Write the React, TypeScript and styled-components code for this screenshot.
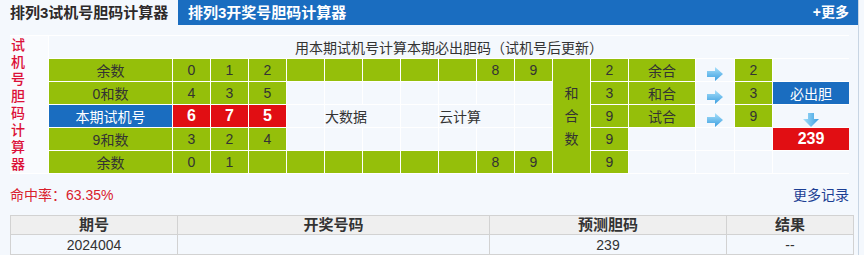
import React, { FC } from "react";
import styled, { createGlobalStyle } from "styled-components";

const PAGE_BG = "#f4f8fd";
const GREEN = "#95bf0a";
const BLUE = "#1a6dc0";
const RED = "#e10e13";

const GlobalStyle = createGlobalStyle`
  html, body {
    margin: 0;
    padding: 0;
    background: ${PAGE_BG};
    font-family: "Liberation Sans", "Noto Sans CJK SC", sans-serif;
    color: #333;
  }
`;

const Page = styled.div`
  width: 858px;
  min-height: 255px;
  border-right: 1px solid #c8d5e3;
`;

const TabBar = styled.div`
  display: flex;
  height: 25px;
  line-height: 25px;
  font-weight: bold;
  font-size: 15px;
`;

const ActiveTab = styled.div`
  width: 168px;
  padding-left: 10px;
  color: #2e2a2a;
  white-space: nowrap;
`;

const BlueBar = styled.div`
  flex: 1;
  display: flex;
  justify-content: space-between;
  padding: 0 9px 0 10px;
  background: ${BLUE};
  color: #fff;
`;

const MoreLink = styled.span`
  font-size: 14px;
`;

const Body = styled.div`
  padding: 10px 9px 0 10px;
`;

const Board = styled.div`
  display: grid;
  grid-template-columns: 38px 123px repeat(10, 37px) 37px 37px 66px 38px 37px 76px;
  grid-auto-rows: 22px;
  gap: 1px;
  padding: 1px 0;
  background: #fff;
`;

type Tone = "plain" | "green" | "blue" | "red";

const tones: Record<Tone, { bg: string; fg: string }> = {
  plain: { bg: PAGE_BG, fg: "#333" },
  green: { bg: GREEN, fg: "#333" },
  blue: { bg: BLUE, fg: "#fff" },
  red: { bg: RED, fg: "#fff" },
};

const Cell = styled.div<{
  $tone?: Tone;
  $span?: number;
  $rows?: number;
  $align?: "left" | "center";
  $valign?: "center" | "end";
}>`
  display: flex;
  align-items: ${(p) => (p.$valign === "end" ? "flex-end" : "center")};
  justify-content: ${(p) => (p.$align === "left" ? "flex-start" : "center")};
  grid-column: span ${(p) => p.$span ?? 1};
  grid-row: span ${(p) => p.$rows ?? 1};
  background: ${(p) => tones[p.$tone ?? "plain"].bg};
  color: ${(p) => tones[p.$tone ?? "plain"].fg};
  font-size: ${(p) => (p.$tone === "red" ? "16px" : "14px")};
  font-weight: ${(p) => (p.$tone === "red" ? "bold" : "normal")};
  white-space: nowrap;
`;

const SideLabel = styled.div`
  grid-row: span 6;
  display: flex;
  flex-direction: column;
  justify-content: center;
  align-items: flex-start;
  padding-left: 1px;
  background: #f9fbfe;
  color: #dc1038;
  font-size: 14px;
  font-weight: 500;
  line-height: 17px;
`;

const StackText = styled.div`
  display: flex;
  flex-direction: column;
  align-items: center;
  line-height: 23px;
`;

const StatsRow = styled.div`
  display: flex;
  justify-content: space-between;
  align-items: center;
  height: 20px;
  margin: 10px 0 11px;
  font-size: 14px;
`;

const HitRate = styled.span`
  color: #d9202c;
`;

const Records = styled.span`
  color: #1c3f94;
`;

const History = styled.table`
  width: 839px;
  border-collapse: collapse;
  table-layout: fixed;
  font-size: 14px;
`;

const Th = styled.th<{ $w: number }>`
  width: ${(p) => p.$w}px;
  height: 18px;
  padding: 0;
  line-height: 18px;
  border: 1px solid #d2d2d2;
  background: #efefef;
  font-size: 15px;
  font-weight: bold;
  color: #333;
`;

const Td = styled.td`
  height: 19px;
  padding: 0;
  border: 1px solid #d2d2d2;
  text-align: center;
  color: #333;
`;

const RightArrow: FC = () => (
  <svg width="16" height="14" viewBox="0 0 16 14">
    <defs>
      <linearGradient id="ra" x1="0" y1="0" x2="0" y2="1">
        <stop offset="0" stopColor="#a8e0fa" />
        <stop offset="1" stopColor="#3b9ee0" />
      </linearGradient>
    </defs>
    <path d="M0 4H8V0L16 7L8 14V10H0Z" fill="url(#ra)" />
  </svg>
);

const DownArrow: FC = () => (
  <svg width="16" height="14" viewBox="0 0 16 14">
    <defs>
      <linearGradient id="da" x1="0" y1="0" x2="1" y2="0">
        <stop offset="0" stopColor="#a8e0fa" />
        <stop offset="1" stopColor="#3b9ee0" />
      </linearGradient>
    </defs>
    <path d="M5 0H11V6H16L8 14L0 6H5Z" fill="url(#da)" />
  </svg>
);

type Slot = { text?: string; tone?: Tone; span?: number; align?: "left" | "center" };

const g = (text = ""): Slot => ({ text, tone: "green" });
const p = (text = "", span = 1, align: "left" | "center" = "center"): Slot => ({
  text,
  span,
  align,
});

// left half of each row: label + ten digit columns
const rows: Slot[][] = [
  [g("余数"), g("0"), g("1"), g("2"), g(), g(), g(), g(), g(), g("8"), g("9")],
  [g("0和数"), g("4"), g("3"), g("5"), p(), p(), p(), p(), p(), p(), p()],
  [
    { text: "本期试机号", tone: "blue" },
    { text: "6", tone: "red" },
    { text: "7", tone: "red" },
    { text: "5", tone: "red" },
    p(),
    p("大数据", 2, "left"),
    p(),
    p("云计算", 2, "left"),
    p(),
  ],
  [g("9和数"), g("3"), g("2"), g("4"), p(), p(), p(), p(), p(), p(), p()],
  [g("余数"), g("0"), g("1"), g(), g(), g(), g(), g(), g(), g("8"), g("9")],
];

const sums = [
  { val: "2", label: "余合", res: "2" },
  { val: "3", label: "和合", res: "3" },
  { val: "9", label: "试合", res: "9" },
  { val: "9" },
  { val: "9" },
];

const lastColumn = (i: number) => {
  if (i === 1) return <Cell $tone="blue">必出胆</Cell>;
  if (i === 2)
    return (
      <Cell $valign="end">
        <DownArrow />
      </Cell>
    );
  if (i === 3) return <Cell $tone="red">239</Cell>;
  return <Cell />;
};

const App: FC = () => {
  return (
    <Page>
      <GlobalStyle />
      <TabBar>
        <ActiveTab>排列3试机号胆码计算器</ActiveTab>
        <BlueBar>
          <span>排列3开奖号胆码计算器</span>
          <MoreLink>+更多</MoreLink>
        </BlueBar>
      </TabBar>
      <Body>
        <Board>
          <SideLabel>
            {"试机号胆码计算器".split("").map((c, i) => (
              <span key={i}>{c}</span>
            ))}
          </SideLabel>
          <Cell $span={17}>用本期试机号计算本期必出胆码（试机号后更新）</Cell>
          {rows.map((row, i) => (
            <React.Fragment key={i}>
              {row.map((s, j) => (
                <Cell key={j} $tone={s.tone} $span={s.span} $align={s.align}>
                  {s.text}
                </Cell>
              ))}
              {i === 0 && (
                <Cell $tone="green" $rows={5}>
                  <StackText>
                    <span>和</span>
                    <span>合</span>
                    <span>数</span>
                  </StackText>
                </Cell>
              )}
              <Cell $tone="green">{sums[i].val}</Cell>
              {sums[i].label ? (
                <>
                  <Cell $tone="green">{sums[i].label}</Cell>
                  <Cell $valign="end">
                    <RightArrow />
                  </Cell>
                  <Cell $tone="green">{sums[i].res}</Cell>
                </>
              ) : (
                <>
                  <Cell />
                  <Cell />
                  <Cell />
                </>
              )}
              {lastColumn(i)}
            </React.Fragment>
          ))}
        </Board>
        <StatsRow>
          <HitRate>命中率：63.35%</HitRate>
          <Records>更多记录</Records>
        </StatsRow>
        <History>
          <thead>
            <tr>
              <Th $w={166}>期号</Th>
              <Th $w={311}>开奖号码</Th>
              <Th $w={236}>预测胆码</Th>
              <Th $w={126}>结果</Th>
            </tr>
          </thead>
          <tbody>
            <tr>
              <Td>2024004</Td>
              <Td></Td>
              <Td>239</Td>
              <Td>--</Td>
            </tr>
          </tbody>
        </History>
      </Body>
    </Page>
  );
};

export default App;
